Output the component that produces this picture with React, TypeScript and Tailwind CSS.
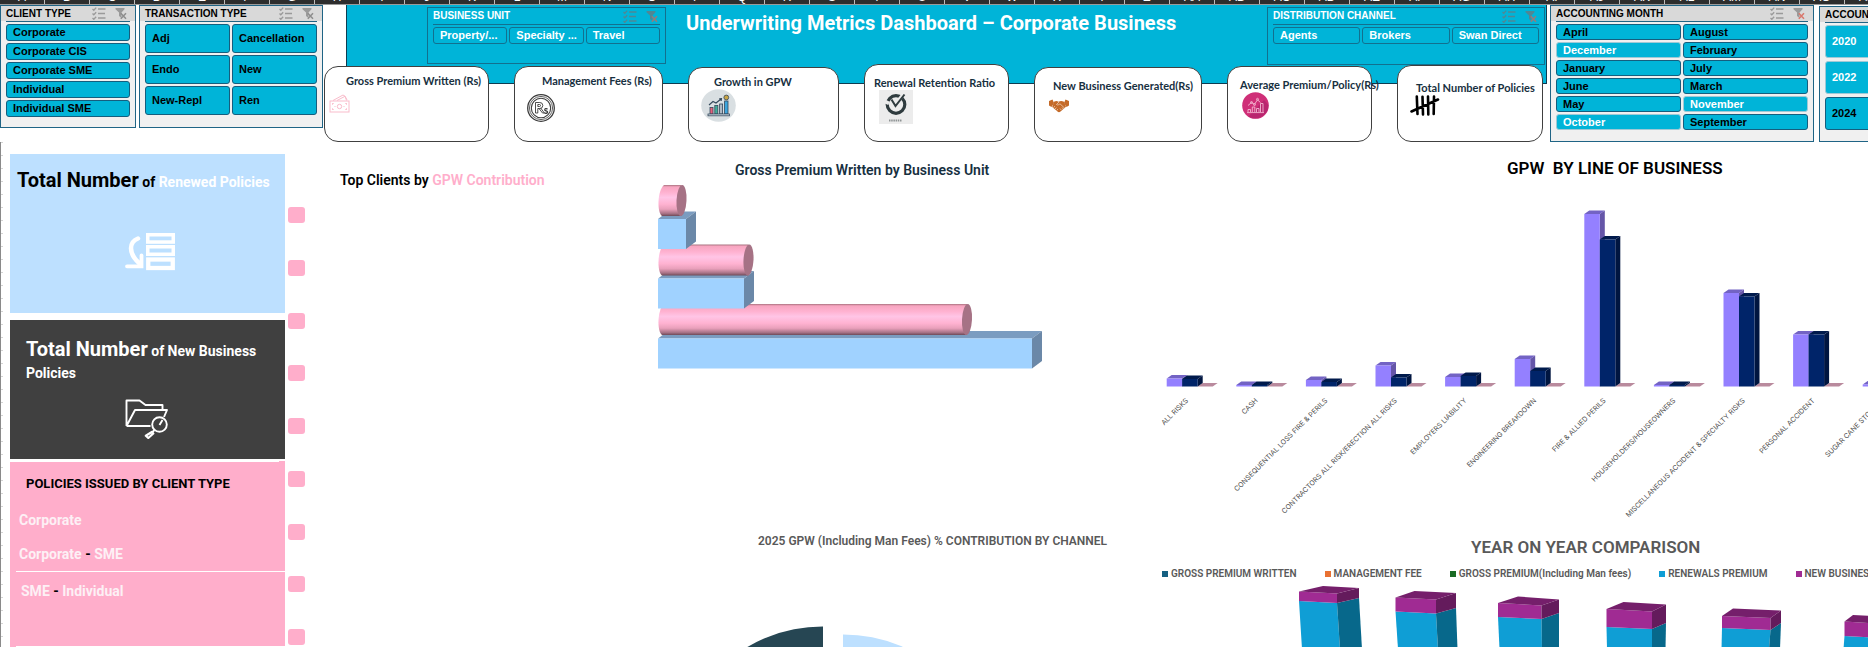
import React from "react";

const COLUMNS = Array.from({ length: 42 }, (_, i) =>
  i < 26 ? String.fromCharCode(65 + i) : "A" + String.fromCharCode(65 + i - 26),
);

type SlicerItem = { label: string; muted?: boolean };

function SlicerTools({ line, cross }: { line: string; cross: string }) {
  return (
    <span className="flex items-center gap-[9px]">
      <button type="button" aria-label="Multi-select" className="block">
        <svg width="14" height="13" viewBox="0 0 14 13" fill="none" stroke={line} strokeWidth="1.3">
          <path d="M0.5 2l1.3 1.3L4.2 0.6M0.5 6.5l1.3 1.3L4.2 5.2M0.5 11l1.3 1.3L4.2 9.7" />
          <path d="M6 2h7.5M6 6.5h7M6 11h7.5" strokeWidth="1.6" />
        </svg>
      </button>
      <button type="button" aria-label="Clear filter" className="block">
        <svg width="12" height="13" viewBox="0 0 12 13">
          <path d="M0.5 1h9v1.2L6.5 5.6V11L4 9V5.6L0.5 2.2z" fill={line} />
          <path d="M5.8 6.2l5.2 5.6M11 6.2l-5.2 5.6" stroke={cross} strokeWidth="1.5" fill="none" />
        </svg>
      </button>
    </span>
  );
}

function Slicer({
  title,
  items,
  grid,
  rowHeight,
  className,
  cross = "#8d8d8d",
}: {
  title: string;
  items: SlicerItem[];
  grid: string;
  rowHeight: string;
  className: string;
  cross?: string;
}) {
  return (
    <section className={`shrink-0 border border-[#1f6485] bg-[#f0f0f0] text-black ${className}`}>
      <header className="flex h-[15px] items-center justify-between bg-[#d9d9d9] pr-2 pl-[5px]">
        <h2 className="text-[10px] leading-[15px] font-bold whitespace-nowrap">{title}</h2>
        <SlicerTools line="#9a9a9a" cross={cross} />
      </header>
      <div className={`mx-[5px] grid border-t border-[#1f6485] pt-[2px] ${grid}`}>
        {items.map((item) => (
          <button
            type="button"
            key={item.label}
            className={`rounded-[3px] border bg-[#00b4d8] pl-[6px] text-left text-[11px] leading-none font-bold ${rowHeight} ${
              item.muted ? "border-[#9fc9d6] text-white" : "border-[#155e7e]"
            }`}
          >
            {item.label}
          </button>
        ))}
      </div>
    </section>
  );
}

function BannerSlicer({ title, items, className }: { title: string; items: string[]; className: string }) {
  return (
    <section className={`shrink-0 border border-[#12708f] px-[5px] text-white ${className}`}>
      <header className="flex h-[17px] items-center justify-between border-b border-[#12708f] pr-[2px]">
        <h2 className="text-[10px] leading-4 font-bold whitespace-nowrap">{title}</h2>
        <SlicerTools line="#4f8795" cross="#9a7a78" />
      </header>
      <div className="grid grid-cols-3 gap-[2px] pt-[2px]">
        {items.map((label) => (
          <button
            type="button"
            key={label}
            className="h-[17px] rounded-[3px] border border-[#12708f] pl-[6px] text-left text-[11px] leading-none font-bold whitespace-nowrap"
          >
            {label}
          </button>
        ))}
      </div>
    </section>
  );
}

function CashIcon() {
  return (
    <svg width="21" height="19" viewBox="0 0 21 19" fill="none" stroke="#f9bccb" strokeWidth="1">
      <path d="M4 6.5L14 1l2 1.2L18 5.8M8 6.5l8-4.2 1.6 4.2" />
      <rect x="1" y="7" width="19" height="11" />
      <path d="M3 9.500h2M16 9.500h2M3 15.500h2M16 15.500h2M3.500 9v2M17.500 9v2M3.500 14v2M17.500 14v2" strokeWidth="0.700" />
      <circle cx="10.500" cy="12.500" r="2.200" />
      <path d="M5.500 12.500h1M14.500 12.500h1" />
    </svg>
  );
}

function CoinIcon() {
  return (
    <svg width="28" height="28" viewBox="0 0 28 28" fill="none" stroke="#3b3b3b">
      <circle cx="14" cy="14" r="13.300" strokeWidth="1.300" />
      <circle cx="14" cy="14" r="11.600" strokeWidth="0.800" />
      <circle cx="14" cy="14" r="9.700" strokeWidth="1.100" />
      <path
        d="M8.500 19V8.500h4.300a2.900 2.900 0 010 6h-2v4.500zM12 14.500l3.500 4.500h1.800l-3.600-5M10.800 10.500h1.700a1 1 0 010 2h-1.700z"
        strokeWidth="0.900"
      />
      <path d="M20.500 15.200c-1-1-3-.5-2.700.8.300 1 2.700.8 2.800 2 .1 1.400-2.200 1.700-3.300.6" strokeWidth="1.300" />
    </svg>
  );
}

function GrowthIcon() {
  return (
    <svg width="35" height="33" viewBox="0 0 35 33">
      <ellipse cx="17.500" cy="16.500" rx="17.300" ry="16.300" fill="#d9dfe2" />
      <g stroke="#33475a" strokeWidth="0.800">
        <rect x="9" y="18.500" width="3" height="6.500" fill="#e8607a" />
        <rect x="13.800" y="16.500" width="3" height="8.500" fill="#3fae9a" />
        <rect x="18.600" y="15" width="3" height="10" fill="#aeb9c4" />
        <rect x="23.600" y="12" width="3.400" height="13" fill="#3da5dc" />
        <rect x="7" y="25" width="21.500" height="1.800" fill="#dbe5ec" />
        <path d="M8 16l4-3.500 3 1.500 5-4M18.200 9.800l2.300-.2-.4 2.400" fill="none" strokeWidth="1.100" />
        <circle cx="25.300" cy="8.500" r="2.400" fill="#c9a545" />
      </g>
    </svg>
  );
}

function RenewIcon() {
  return (
    <svg width="34" height="34" viewBox="0 0 34 34">
      <rect width="34" height="34" fill="#ececec" />
      <circle cx="17" cy="14.500" r="8.800" fill="none" stroke="#2f3b3e" strokeWidth="3.200" />
      <path d="M6 11.500l4 1.800M19 11L27 1" fill="none" stroke="#ececec" strokeWidth="3.600" />
      <path d="M12.500 9.500l4 6.500L25.500 4.500" fill="none" stroke="#2f3b3e" strokeWidth="2" />
      <path d="M10 30.500h13" stroke="#8e9394" strokeWidth="2" strokeDasharray="1.500 0.700" />
    </svg>
  );
}

function HandshakeIcon() {
  return (
    <svg width="20" height="14" viewBox="0 0 20 14">
      <path d="M0 2l3.500-1.500L5 4 2.500 8 0 6.500zM20 2l-3.500-1.500L15 4l2.500 4L20 6.500z" fill="#c46a28" />
      <path
        d="M5 2.800c2-1 3-.8 4.500 0C11.500 1.600 13 1.800 15 2.800l2 5-5.500 4.700c-1 1-2.200.8-3 0L3.200 8z"
        fill="#c46a28"
      />
      <path
        d="M10 3L7.500 5.500c1.200 1 2.500 0 3.500-.7L15.500 9M4.500 8.500l1.500-1.300M6 10l1.500-1.300M7.700 11.300L9 10.200M13 8.500l1.300 1.500M11 9.500l1.300 1.500"
        fill="none"
        stroke="#f3dcc8"
        strokeWidth="0.700"
      />
    </svg>
  );
}

function AverageIcon() {
  return (
    <svg width="27" height="27" viewBox="0 0 27 27">
      <circle cx="13.500" cy="13.500" r="13.300" fill="#cf2f78" />
      <path d="M26.500 13a13.300 13.300 0 01-20 11.500L22 8z" fill="#a81f68" opacity="0.550" />
      <g fill="none" stroke="#f3b6d0" strokeWidth="0.900">
        <path d="M6 20v-2.500h2.500V20M10.300 20v-5h2.500v5M14.500 20v-3.500H17V20M18.500 20v-8.500H21V20M5 20.600h17" />
        <path d="M6 13.500l3.500-3 3 1.800 3-4.500 3 2.800" />
        <circle cx="9.500" cy="10.500" r="1" />
        <circle cx="15.500" cy="7.300" r="1" />
        <circle cx="12.500" cy="12.500" r="1" />
      </g>
    </svg>
  );
}

function TallyIcon() {
  return (
    <svg width="30" height="21" viewBox="0 0 30 21" fill="none" stroke="#000" strokeLinecap="round" strokeWidth="2.600">
      <path d="M6.800 1.500L7.500 19M12.500 1.800l.5 17.700M18 1.500l.3 18M24 1.500l-.3 17.500M1.500 16.500L28 4.500" />
    </svg>
  );
}

const CARDS: { title: string; box: string; pad: string; icon: React.ReactNode; iconPad: string }[] = [
  { title: "Gross Premium Written (Rs)", box: "w-[165px] h-[76px] pt-[7px]", pad: "pl-[21px]", icon: <CashIcon />, iconPad: "pl-1 pt-[6px]" },
  { title: "Management Fees (Rs)", box: "w-[149px] h-[76px] pt-[7px]", pad: "pl-[27px]", icon: <CoinIcon />, iconPad: "pl-3 pt-[6px]" },
  { title: "Growth in GPW", box: "w-[151px] h-[75px] pt-[7px]", pad: "pl-[25px]", icon: <GrowthIcon />, iconPad: "pl-3" },
  { title: "Renewal Retention Ratio", box: "w-[145px] h-[78px] pt-[11px]", pad: "pl-[9px]", icon: <RenewIcon />, iconPad: "pl-[14px]" },
  { title: "New Business Generated(Rs)", box: "w-[168px] h-[75px] pt-[11px]", pad: "pl-[18px]", icon: <HandshakeIcon />, iconPad: "pl-[14px] pt-[6px]" },
  { title: "Average Premium/Policy(Rs)", box: "w-[145px] h-[76px] pt-[11px]", pad: "pl-3", icon: <AverageIcon />, iconPad: "pl-[14px]" },
  { title: "Total Number of Policies", box: "w-[146px] h-[77px] pt-[15px]", pad: "pl-[18px]", icon: <TallyIcon />, iconPad: "pl-3" },
];

function MetricCards() {
  return (
    <div className="relative -mt-5 flex items-end gap-[25px]">
      {CARDS.map((card) => (
        <article key={card.title} className={`shrink-0 rounded-[14px] border border-[#404040] bg-white ${card.box}`}>
          <h3
            className={`font-['Lato','Noto_Sans',sans-serif] text-[11px] leading-[14px] font-bold whitespace-nowrap text-[#17303f] ${card.pad}`}
          >
            {card.title}
          </h3>
          <div className={card.iconPad}>{card.icon}</div>
        </article>
      ))}
    </div>
  );
}

const MONTHS: SlicerItem[] = [
  { label: "April" },
  { label: "August" },
  { label: "December", muted: true },
  { label: "February" },
  { label: "January" },
  { label: "July" },
  { label: "June" },
  { label: "March" },
  { label: "May" },
  { label: "November", muted: true },
  { label: "October", muted: true },
  { label: "September" },
];

function Header() {
  return (
    <div className="flex items-start">
      <Slicer
        title="CLIENT TYPE"
        items={["Corporate", "Corporate CIS", "Corporate SME", "Individual", "Individual SME"].map((label) => ({ label }))}
        grid="gap-[2px]"
        rowHeight="h-[17px]"
        className="h-[123px] w-[136px]"
      />
      <Slicer
        title="TRANSACTION TYPE"
        items={["Adj", "Cancellation", "Endo", "New", "New-Repl", "Ren"].map((label) => ({ label }))}
        grid="grid-cols-2 gap-[2px]"
        rowHeight="h-[29px]"
        className="ml-[3px] h-[123px] w-[184px]"
      />
      <div className="min-w-0 flex-1">
        <div className="mr-[3px] ml-[23px] flex h-[79px] border-x border-b border-[#0d3c52] bg-[#00b4d8]">
          <BannerSlicer
            title="BUSINESS UNIT"
            items={["Property/...", "Specialty ...", "Travel"]}
            className="mt-[2px] ml-20 h-[57px] w-[239px]"
          />
          <h1 className="min-w-0 flex-1 pt-1 pl-5 text-[20px] leading-7 font-bold whitespace-nowrap text-white font-['Roboto',sans-serif]">
            Underwriting Metrics Dashboard – Corporate Business
          </h1>
          <BannerSlicer
            title="DISTRIBUTION CHANNEL"
            items={["Agents", "Brokers", "Swan Direct"]}
            className="mt-[2px] mr-px h-[58px] w-[278px]"
          />
        </div>
        <div className="pl-px">
          <MetricCards />
        </div>
      </div>
      <Slicer
        title="ACCOUNTING MONTH"
        items={MONTHS}
        grid="grid-cols-2 gap-[2px]"
        rowHeight="h-4"
        className="h-[137px] w-[264px]"
        cross="#d9776c"
      />
      <div className="ml-[5px] w-[49px] shrink-0 overflow-hidden">
        <Slicer
          title="ACCOUNTING YEAR"
          items={[{ label: "2020", muted: true }, { label: "2022", muted: true }, { label: "2024" }]}
          grid="gap-[3px]"
          rowHeight="h-[33px]"
          className="mt-px h-[136px] w-[184px]"
        />
      </div>
    </div>
  );
}

function Sidebar() {
  return (
    <aside className="w-[275px] shrink-0 font-['Roboto',sans-serif] font-bold">
      <section className="h-[159px] bg-[#bde0ff] pt-3 pl-[7px]">
        <h2 className="text-[14px] leading-7 whitespace-nowrap text-black">
          <span className="text-[20px]">Total Number</span> of <span className="text-white">Renewed Policies</span>
        </h2>
        <svg className="mt-9 ml-[108px]" width="52" height="40" viewBox="0 0 52 40" fill="none" stroke="#fff">
          <rect x="22.750" y="2.750" width="25.500" height="7.300" strokeWidth="3.500" />
          <rect x="22.750" y="14.750" width="25.500" height="7.500" strokeWidth="3.500" />
          <rect x="23.250" y="27.500" width="24.500" height="8.500" strokeWidth="4.300" />
          <path d="M13 6.500C4 10 3 21 14 31" strokeWidth="4.500" strokeLinecap="round" />
          <path d="M2 34.300h14.500V23.500" strokeWidth="3.800" strokeLinecap="round" />
        </svg>
      </section>
      <section className="mt-[7px] h-[139px] bg-[#404040] pt-[15px] pl-4 text-white">
        <h2 className="text-[14px] leading-5">
          <span className="text-[20px] leading-7">Total Number</span> of New Business
          <br />
          Policies
        </h2>
        <svg className="mt-[15px] ml-[99px]" width="44" height="41" viewBox="0 0 44 41" fill="none" stroke="#fff" strokeWidth="1.900">
          <path d="M1.500 28V2.500h13l6 4.500h17v5M1.500 28l8.500-16h32l-3 7M1.500 28h24" strokeLinejoin="round" />
          <circle cx="34.500" cy="26.500" r="7.300" />
          <path d="M29.500 32l-3 3M34.500 27l3-5" />
          <path d="M26.800 34l1.500 1.500-5 4.500-2.500-2.300z" strokeWidth="2.200" strokeLinejoin="round" />
        </svg>
      </section>
      <section className="mt-[2px] min-h-[190px] bg-[#ffaecb] text-[14px] leading-5 text-[#fdf0f5]">
        <div className="mr-[6px] border-t border-white" />
        <h2 className="pt-3 pl-4 text-[13px] leading-5 text-black">POLICIES ISSUED BY CLIENT TYPE</h2>
        <p className="mt-4 pl-[9px]">Corporate</p>
        <p className="mt-[14px] ml-[6px] border-b border-white pb-[7px] pl-[3px]">
          Corporate <span className="text-black">-</span> SME
        </p>
        <p className="mt-[9px] ml-[6px] border-b border-white pb-[45px] pl-[5px]">
          SME <span className="text-black">-</span> Individual
        </p>
      </section>
    </aside>
  );
}

function Cylinder({ y, end }: { y: number; end: number }) {
  const b = y + 31;
  return (
    <g>
      <path
        d={`M664 ${y}H${end}V${b}H662C657 ${b - 3} 657 ${y + 6} 664 ${y}z`}
        fill="url(#tube)"
      />
      <ellipse cx={end} cy={y + 15.5} rx="5" ry="15.500" fill="#a67285" transform={`rotate(3 ${end} ${y + 15.5})`} />
    </g>
  );
}

function Box({ y, right }: { y: number; right: number }) {
  return (
    <g>
      <path d={`M658 ${y}L668 ${y - 7.5}H${right + 10}L${right} ${y}z`} fill="#7b9cc0" />
      <path d={`M${right} ${y}l10 -7.500v30l-10 7.500z`} fill="#6b88a8" />
      <rect x="658" y={y} width={right - 658} height="30" fill="#a0d2ff" />
    </g>
  );
}

function BusinessUnitChart() {
  return (
    <svg width="420" height="200" viewBox="650 180 420 200" role="img" aria-label="Gross premium by business unit">
      <defs>
        <linearGradient id="tube" x1="0" x2="0" y1="0" y2="1">
          <stop offset="0" stopColor="#a8727f" />
          <stop offset="0.060" stopColor="#f7a5c0" />
          <stop offset="0.250" stopColor="#ffb3d2" />
          <stop offset="0.400" stopColor="#ffc5e6" />
          <stop offset="0.620" stopColor="#ffb2d1" />
          <stop offset="0.780" stopColor="#e9a0bb" />
          <stop offset="0.920" stopColor="#a87286" />
          <stop offset="1" stopColor="#6f4a58" />
        </linearGradient>
      </defs>
      <Box y={338.5} right={1032} />
      <Cylinder y={304} end={967} />
      <Box y={278.5} right={744} />
      <Cylinder y={244.5} end={748.5} />
      <Box y={219} right={686} />
      <Cylinder y={185} end={681.5} />
    </svg>
  );
}

const LINES: [string, number, number][] = [
  ["ALL RISKS", 8, 7.5],
  ["CASH", 1.5, 1.5],
  ["CONSEQUENTIAL LOSS FIRE & PERILS", 6.5, 4.5],
  ["CONTRACTORS ALL RISK/ERECTION ALL RISKS", 21, 9],
  ["EMPLOYERS LIABILITY", 9.5, 10.5],
  ["ENGINEERING BREAKDOWN", 27.5, 15.5],
  ["FIRE & ALLIED PERILS", 172.5, 147],
  ["HOUSEHOLDERS/HOUSEOWNERS", 1.5, 1.5],
  ["MISCELLANEOUS ACCIDENT & SPECIALTY RISKS", 93.5, 90],
  ["PERSONAL ACCIDENT", 52, 52],
  ["SUGAR CANE STORAGE", 2, 2],
];

function Column({ x, h, front, top, side }: { x: number; h: number; front: string; top: string; side: string }) {
  const base = 386.5;
  return (
    <g>
      <path d={`M${x} ${base - h}l5 -3.500h15.500l-5 3.500z`} fill={top} />
      <path d={`M${x + 15.5} ${base - h}l5 -3.500v${h}l-5 3.500z`} fill={side} />
      <rect x={x} y={base - h} width="15.500" height={h} fill={front} />
    </g>
  );
}

function LineOfBusinessChart() {
  return (
    <svg className="block w-full" height="344" viewBox="1150 186 718 344" preserveAspectRatio="xMinYMin slice" role="img" aria-label="GPW by line of business">
      {LINES.map(([name, a, b], i) => {
        const x = 1166.7 + i * 69.6;
        return (
          <g key={name}>
            <path d={`M${x + 31} 386.500l5 -3.500h15l-5 3.500z`} fill="#b98a9d" />
            <Column x={x} h={a} front="#9480ff" top="#7363c4" side="#6556a8" />
            <Column x={x + 15.5} h={b} front="#002469" top="#001a4c" side="#001540" />
            <text
              x={x + 22}
              y="401"
              textAnchor="end"
              transform={`rotate(-45 ${x + 22} 401)`}
              className="font-['Inter','Roboto',sans-serif] text-[7px]"
              fill="#4d4d4d"
            >
              {name}
            </text>
          </g>
        );
      })}
    </svg>
  );
}

const LEGEND: [string, string][] = [
  ["bg-[#156082]", "GROSS PREMIUM WRITTEN"],
  ["bg-[#e97132]", "MANAGEMENT FEE"],
  ["bg-[#196b24]", "GROSS PREMIUM(Including Man fees)"],
  ["bg-[#0f9ed5]", "RENEWALS PREMIUM"],
  ["bg-[#a02b93]", "NEW BUSINESS"],
];

/* Per column: front-left, front-right and side x at the top, the same at the
   bottom, the back corner, then top and boundary heights for those edges. */
const STACKS = [
  { t: [1299, 1337, 1359], b: [1302, 1340, 1362], back: [1323, 584], y: [589.5, 591.5, 586], m: [599, 601, 596] },
  { t: [1395.5, 1436, 1456], b: [1398, 1438, 1457.5], back: [1414.5, 589], y: [595.5, 597.5, 591], m: [609.5, 611.5, 606] },
  { t: [1498, 1541.5, 1559], b: [1499.5, 1542, 1559], back: [1518, 594.5], y: [601, 603.5, 597.5], m: [615, 617, 611] },
  { t: [1606.5, 1652, 1666], b: [1607, 1652, 1665.5], back: [1623.5, 600], y: [607, 609.5, 602.5], m: [625, 627, 621] },
  { t: [1722, 1770.5, 1781], b: [1721.5, 1769, 1780], back: [1733, 606.5], y: [614, 616, 608.5], m: [626, 628, 621] },
  { t: [1844.5, 1897, 1905], b: [1843.5, 1895, 1903], back: [1853, 613], y: [619.5, 623, 616], m: [634, 637, 629] },
];

function YearChart() {
  return (
    <svg className="block w-full" height="67" viewBox="1150 580 718 67" preserveAspectRatio="xMinYMin slice" role="img" aria-label="Year on year comparison">
      {STACKS.map(({ t, b, back, y, m }) => (
        <g key={t[0]}>
          <path d={`M${t[0]} ${m[0]}L${t[1]} ${m[1]}L${b[1]} 647H${b[0]}z`} fill="#0f9ed5" />
          <path d={`M${t[1]} ${m[1]}L${t[2]} ${m[2]}L${b[2]} 647H${b[1]}z`} fill="#07688b" />
          <path d={`M${t[0]} ${y[0]}L${t[1]} ${y[1]}V${m[1]}L${t[0]} ${m[0]}z`} fill="#a02b93" />
          <path d={`M${t[1]} ${y[1]}L${t[2]} ${y[2]}V${m[2]}L${t[1]} ${m[1]}z`} fill="#641b5c" />
          <path d={`M${t[0]} ${y[0]}L${back[0]} ${back[1]}L${t[2]} ${y[2]}L${t[1]} ${y[1]}z`} fill="#751f6b" />
        </g>
      ))}
    </svg>
  );
}

export default function App() {
  return (
    <div className="flex h-screen flex-col overflow-hidden bg-white font-['Liberation_Sans',Arial,sans-serif]">
      <div className="flex h-[5px] shrink-0 overflow-hidden border-b border-[#9a9a9a] bg-[#2d2d2d]">
        {COLUMNS.map((name) => (
          <div key={name} className="flex h-1 w-[45px] shrink-0 items-end justify-center border-r border-[#bdbdbd]">
            <span className="mb-[-1px] text-[12px] leading-4 text-white">{name}</span>
          </div>
        ))}
      </div>
      <Header />
      <main className="flex min-h-0 flex-1 border-l border-[#8a8a8a]">
        <div className="w-[9px] shrink-0">
          <div className="h-full w-[2px] bg-[repeating-linear-gradient(to_bottom,#d4d4d4_0,#d4d4d4_1px,transparent_1px,transparent_13px)]" />
        </div>
        <div className="pt-3">
          <Sidebar />
        </div>
        <div className="ml-[3px] flex h-[503px] w-[17px] shrink-0 flex-col justify-between pt-[65px]">
          {Array.from({ length: 9 }, (_, i) => (
            <span key={i} className="h-4 rounded-[3px] bg-[#ffaecb]" />
          ))}
        </div>
        <div className="w-[845px] shrink-0 font-['Roboto',sans-serif]">
          <div className="flex h-[389px]">
            <h2 className="w-[345px] shrink-0 pt-7 pl-[35px] text-[14px] leading-5 font-semibold text-black">
              Top Clients by <span className="text-[#ffaecb]">GPW Contribution</span>
            </h2>
            <section className="pt-[18px]">
              <h2 className="pl-[85px] text-[14px] leading-5 font-semibold text-[#17303f]">
                Gross Premium Written by Business Unit
              </h2>
              <BusinessUnitChart />
            </section>
          </div>
          <section>
            <h2 className="pl-[453px] text-[12px] leading-5 font-semibold text-[#595959]">
              2025 GPW (Including Man Fees) % CONTRIBUTION BY CHANNEL
            </h2>
            <svg className="mt-[69px] ml-[415px]" width="240" height="27" viewBox="720 620 240 27" role="img" aria-label="Contribution by channel">
              <path d="M823 775V626.500A148.700 148.700 0 00674 775z" fill="#264653" />
              <path d="M843 784V634.500A150 150 0 01993 784z" fill="#bde0ff" />
            </svg>
          </section>
        </div>
        <div className="min-w-0 flex-1 font-['Roboto',sans-serif]">
          <section className="h-[391px] pt-3">
            <h2 className="mb-1 pl-[357px] text-[17px] leading-7 font-semibold whitespace-pre text-black">
              GPW  BY LINE OF BUSINESS
            </h2>
            <LineOfBusinessChart />
          </section>
          <section>
            <h2 className="pl-[321px] text-[17px] leading-7 font-semibold text-[#595959]">YEAR ON YEAR COMPARISON</h2>
            <ul className="mt-[5px] flex gap-7 pl-3 text-[10px] leading-4 font-semibold whitespace-nowrap text-[#595959]">
              {LEGEND.map(([color, label]) => (
                <li key={label} className="flex shrink-0 items-center gap-[3px]">
                  <span className={`size-[6px] ${color}`} />
                  {label}
                </li>
              ))}
            </ul>
            <YearChart />
          </section>
        </div>
      </main>
    </div>
  );
}
